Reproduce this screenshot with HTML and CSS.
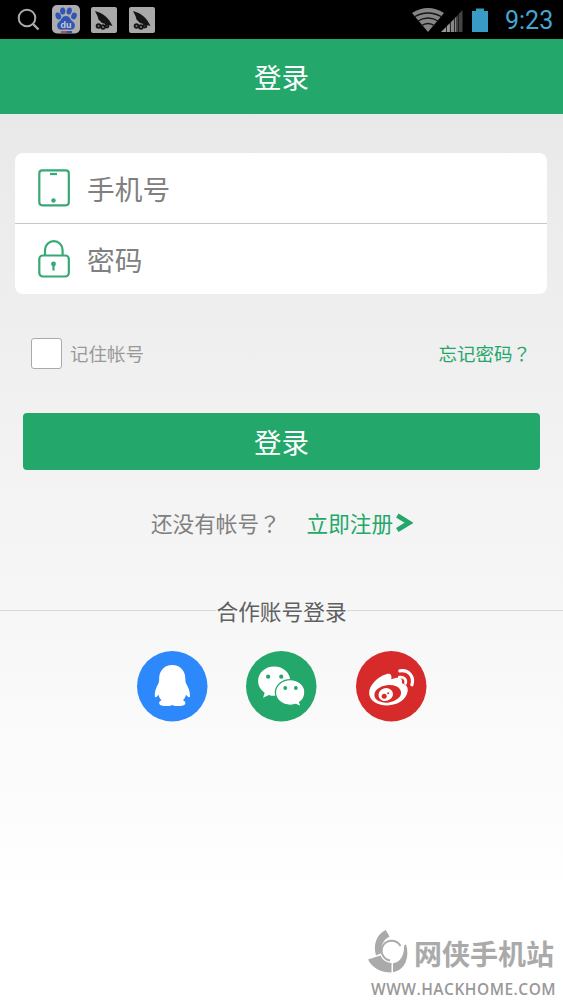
FILE: index.html
```html
<!DOCTYPE html>
<html lang="zh-CN">
<head>
<meta charset="utf-8">
<title>登录</title>
<link rel="stylesheet" href="styles.css">
</head>
<body>
<div class="status">
  <svg class="search" width="24" height="24" viewBox="0 0 24 24" fill="none" stroke="#aaa" stroke-width="2"><circle cx="10" cy="10" r="8.300"/><path d="M16 16 21.500 21.500" stroke-width="2.4"/></svg>
  <svg class="baidu" width="28" height="29" viewBox="0 0 28 29"><rect width="28" height="28.5" rx="5" fill="#adadb0"/><g fill="#3155b5"><ellipse cx="6.3" cy="11" rx="2.7" ry="3.6" transform="rotate(-20 6.3 11)"/><ellipse cx="10.7" cy="6" rx="2.6" ry="3.6"/><ellipse cx="17.2" cy="6" rx="2.6" ry="3.6" transform="rotate(12 17.2 6)"/><ellipse cx="22" cy="11" rx="2.7" ry="3.4" transform="rotate(20 22 11)"/><path d="M14 11c4 0 4 3.500 6.300 5.200s3 3 2.400 5.500c-.8 4-5.700 2.800-8.700 2.800s-7.900 1.200-8.700-2.800c-.5-2.500.3-3.800 2.400-5.500S10 11 14 11z"/></g><text class="du" x="14" y="23" text-anchor="middle">du</text><path d="M9 27h6" stroke="#a9515e" stroke-width="2"/><path d="M15 27h5" stroke="#3c4da6" stroke-width="2"/></svg>
  <svg class="app" width="26" height="26" viewBox="0 0 26 26"><rect width="26" height="26" rx="2" fill="#a9a9a9"/><path d="M4 4C12 6 18 11 21.500 19L16 17.500 11 16 7.500 12.500 6.500 9z" fill="#151515"/><g fill="#777" stroke="#151515" stroke-width="1.800"><circle cx="7.500" cy="19" r="1.900"/><circle cx="12" cy="20" r="1.900"/><circle cx="16" cy="19" r="1.500"/></g></svg>
  <svg class="app" width="26" height="26" viewBox="0 0 26 26"><rect width="26" height="26" rx="2" fill="#a9a9a9"/><path d="M4 4C12 6 18 11 21.500 19L16 17.500 11 16 7.500 12.500 6.500 9z" fill="#151515"/><g fill="#777" stroke="#151515" stroke-width="1.800"><circle cx="7.500" cy="19" r="1.900"/><circle cx="12" cy="20" r="1.900"/><circle cx="16" cy="19" r="1.500"/></g></svg>
  <svg class="signal" width="80" height="26" viewBox="0 0 80 26"><path d="M0 6Q16-4 32 6L16 25z" fill="#858585"/><g fill="none" stroke="#151515" stroke-width="1.300"><path d="M2 10q14-8 28 0M5 14.500q11-7 22 0M9 19q7-5 14 0"/></g><path d="M29 25 37 17v8z" fill="#999"/><path d="M37 17 44 10v15h-7z" fill="#888"/><path d="M44 10 50.500 3v22H44z" fill="#444"/><path d="M34.500 18v7M38.500 14v11M42.500 10v15M46.500 6v19" stroke="#111" stroke-width=".8"/><path d="M60 4h4V1.500h8V4h4v21H60z" fill="#399bc4"/></svg>
  <span class="clock">9:23</span>
</div>
<header class="header">登录</header>
<main class="page">
  <div class="card">
    <div class="field">
      <svg width="32" height="38" viewBox="0 0 32 38" fill="none" stroke="#38a874" stroke-width="2.200"><rect x="1.300" y="1.300" width="29.500" height="35" rx="3"/><path d="M12 5h7" /><circle cx="15.500" cy="31.500" r="2.200" fill="#38a874" stroke="none"/></svg>
      <span>手机号</span>
    </div>
    <div class="field">
      <svg width="32" height="38" viewBox="0 0 32 38" fill="none" stroke="#38a874" stroke-width="2.200"><rect x="1.300" y="15.500" width="29.500" height="21" rx="3.500"/><path d="M7 15V10a8.800 8.800 0 0 1 17.600 0v5"/><circle cx="15.500" cy="24" r="2.400" fill="#38a874" stroke="none"/><path d="M15.500 24v6.500"/></svg>
      <span>密码</span>
    </div>
  </div>
  <div class="options">
    <span class="box"></span><span class="remember">记住帐号</span><a class="forgot">忘记密码<span class="mark" lang="zh-TW">？</span></a>
  </div>
  <div class="submit">登录</div>
  <div class="signup">
    <span class="ask">还没有帐号<span class="mark" lang="zh-TW">？</span></span><a class="register">立即注册</a>
    <svg width="17" height="20" viewBox="0 0 17 20" fill="none" stroke="#24a76b" stroke-width="4.800"><path d="M1.300 2.500 13 9.800 1.300 17"/></svg>
  </div>
  <div class="partner"><span>合作账号登录</span></div>
  <div class="social">
    <svg viewBox="0 0 70 70"><circle cx="35" cy="35" r="35" fill="#2d88fb"/><path d="M35 14c8 0 13 6 13 13.500 0 2 .2 3.500.9 5 2.500 4.500 4 8.500 3.700 13-1.300 1-2.800-.5-4-2-.5 2.500-1.600 4.300-3 5.500 2.200 1 2.800 2.100 2.200 3.700-1 2.500-9.800 2.500-12.800.8-3 1.700-11.800 1.700-12.800-.8-.6-1.600.2-2.800 2.200-3.700-1.400-1.200-2.500-3-3-5.500-1.200 1.500-2.500 3-3.700 2-.4-4.500 1-8.500 3.400-13 .7-1.500.9-3 .9-5C22 20 27 14 35 14z" fill="#fff"/></svg>
    <svg viewBox="0 0 70 70"><circle cx="35" cy="35" r="35" fill="#24a76b"/><path d="M28 15.500c9 0 16 6.300 16 14.500S37 44.500 28 44.500c-2 0-3.700-.2-5.300-.8L17 46.500l1.500-5.100C14.300 38.500 12 34.500 12 30c0-8.200 7-14.500 16-14.500z" fill="#fff"/><path d="M44 28.500c8.200 0 14.500 5.500 14.500 12.700 0 4.200-2 7.500-5.200 9.800l1.500 4.500-5.300-2.400c-1.700.6-3.500.8-5.500.8-8.200 0-14.800-5.500-14.800-12.700S35.800 28.500 44 28.500z" fill="#fff" stroke="#24a76b" stroke-width="1.300"/><g fill="#24a76b"><circle cx="22" cy="25.500" r="2.100"/><circle cx="35" cy="25.500" r="2.100"/><circle cx="39" cy="36.700" r="1.900"/><circle cx="49.500" cy="36.700" r="1.900"/></g></svg>
    <svg viewBox="0 0 70 70"><circle cx="35" cy="35" r="35" fill="#d62b2a"/><path d="M30 23c4-1.200 6 .8 5 5 6-2.500 12-2.500 10.500 4 4.500 1.300 6.500 4 5.800 8C50 48.500 41 54 31 54c-10 0-18-4.500-18-12.500C13 34 22 25 30 23z" fill="#fff"/><ellipse cx="31.500" cy="42.500" rx="13.300" ry="8.700" transform="rotate(-8 31.500 42.500)" fill="#d62b2a"/><ellipse cx="29.500" cy="43.200" rx="7.300" ry="6.300" transform="rotate(-18 29.500 43.200)" fill="#fff"/><circle cx="28" cy="45" r="2.500" fill="#d62b2a"/><circle cx="32" cy="42" r="1" fill="#d62b2a"/><g fill="none" stroke="#fff" stroke-width="3.200" stroke-linecap="round"><path d="M43.500 19.700C52 18 58 25 55.500 33.500"/><path d="M43 26c4.500-.8 7.300 2 6.200 6.200" stroke-width="2.700"/></g></svg>
  </div>
</main>
<footer class="brand">
  <div class="brandrow">
    <svg width="42" height="46" viewBox="0 0 42 46"><g fill="#aaa"><path d="M18.700 2 22.500 8.500C16 12 13.500 18 14.500 25L9 27.500C6 17 9 7 18.700 2z"/><path d="M1 31.500 13.500 27.500C15.500 32 19 34.500 24.500 35V44.500C14 44.500 5 40 1 31.500z"/><path d="M26 35.300c7-1 11.500-8 11-17.500l2-1.500c4 13-1 26-13 28z"/></g><path d="M33.500 18A10 10 0 1 0 23 32.500" fill="none" stroke="#aaa" stroke-width="2"/></svg>
    <span class="brandname">网侠手机站</span>
  </div>
  <div class="url">WWW.HACKHOME.COM</div>
</footer>
</body>
</html>
```
FILE: styles.css
```css
* { box-sizing: border-box; }
body {
  margin: 0;
  width: 563px;
  height: 1002px;
  overflow: hidden;
  display: flex;
  flex-direction: column;
  font-family: "Noto Sans CJK SC", sans-serif;
  background: linear-gradient(#e9e9e9 114px, #f4f4f4 520px, #fff 900px);
}
svg { display: block; flex: none; }
.status {
  height: 39px;
  flex: none;
  background: #000;
  display: flex;
  align-items: center;
  padding-left: 17px;
}
.baidu { margin-left: 11px; margin-right: 11px; }
.app { margin-right: 11.500px; }
.du { font: bold 9px "Liberation Sans", sans-serif; fill: #ccc; }
.signal { margin-left: 246px; }
.clock {
  margin-left: 13px;
  font: 25px/39px Roboto, sans-serif;
  color: #44a6d0;
  padding-top: 2px;
}
.header {
  height: 75px;
  flex: none;
  background: #24a76b;
  color: #fff;
  font-size: 27.5px;
  line-height: 75px;
  text-align: center;
}
.page { padding: 39px 15px 0; flex: 1; }
.card {
  width: 532px;
  height: 141px;
  background: #fff;
  border-radius: 8px;
}
.field {
  height: 70px;
  display: flex;
  align-items: center;
  gap: 17px;
  padding-left: 23px;
  color: #808080;
  font-size: 27.7px;
  line-height: 40px;
}
.field span { padding-bottom: 1px; }
.field + .field { height: 71px; border-top: 1px solid #c8c8c8; }
.options {
  display: flex;
  align-items: center;
  margin-top: 44px;
  padding: 0 17px 0 16px;
  height: 31px;
  font-size: 18.5px;
}
.box {
  width: 31px;
  height: 31px;
  border: 1px solid #aaa;
  border-radius: 3px;
  background: #fff;
}
.remember { margin-left: 8px; padding-bottom: 1px; color: #999; }
.forgot { margin-left: auto; padding-bottom: 1px; color: #24a76b; }
.mark { font-family: "Noto Sans CJK TC", sans-serif; }
.submit {
  margin: 44px 8px 0;
  height: 57px;
  background: #24a76b;
  border-radius: 4px;
  color: #fff;
  font-size: 27.5px;
  line-height: 56px;
  text-align: center;
}
.signup {
  display: flex;
  align-items: center;
  height: 36px;
  margin-top: 35px;
  padding-left: 136px;
  font-size: 21.6px;
  color: #808080;
}
.ask, .register { padding-bottom: 2px; }
.register { margin-left: 26px; color: #24a76b; }
.signup svg { margin-left: 3px; }
.partner {
  display: flex;
  align-items: center;
  margin: 50px -15px 0;
  height: 38px;
  font-size: 21.7px;
  color: #606060;
}
.partner::before, .partner::after {
  content: "";
  flex: 1;
  height: 1px;
  background: #d8d8d8;
}
.social { display: flex; justify-content: center; gap: 39px; margin-top: 22px; }
.social svg { width: 70.5px; height: 70.5px; overflow: visible; }
.brand { width: 196px; height: 74px; margin-left: 367px; flex: none; }
.brandrow { display: flex; gap: 5px; height: 49px; }
.brandname {
  color: #aaa;
  font-size: 28px;
  font-weight: 700;
  line-height: 51px;
}
.url {
  padding-left: 4px;
  font: 600 15.5px/24px "Open Sans", sans-serif;
  letter-spacing: 0.5px;
  color: #999;
  white-space: nowrap;
}
```
